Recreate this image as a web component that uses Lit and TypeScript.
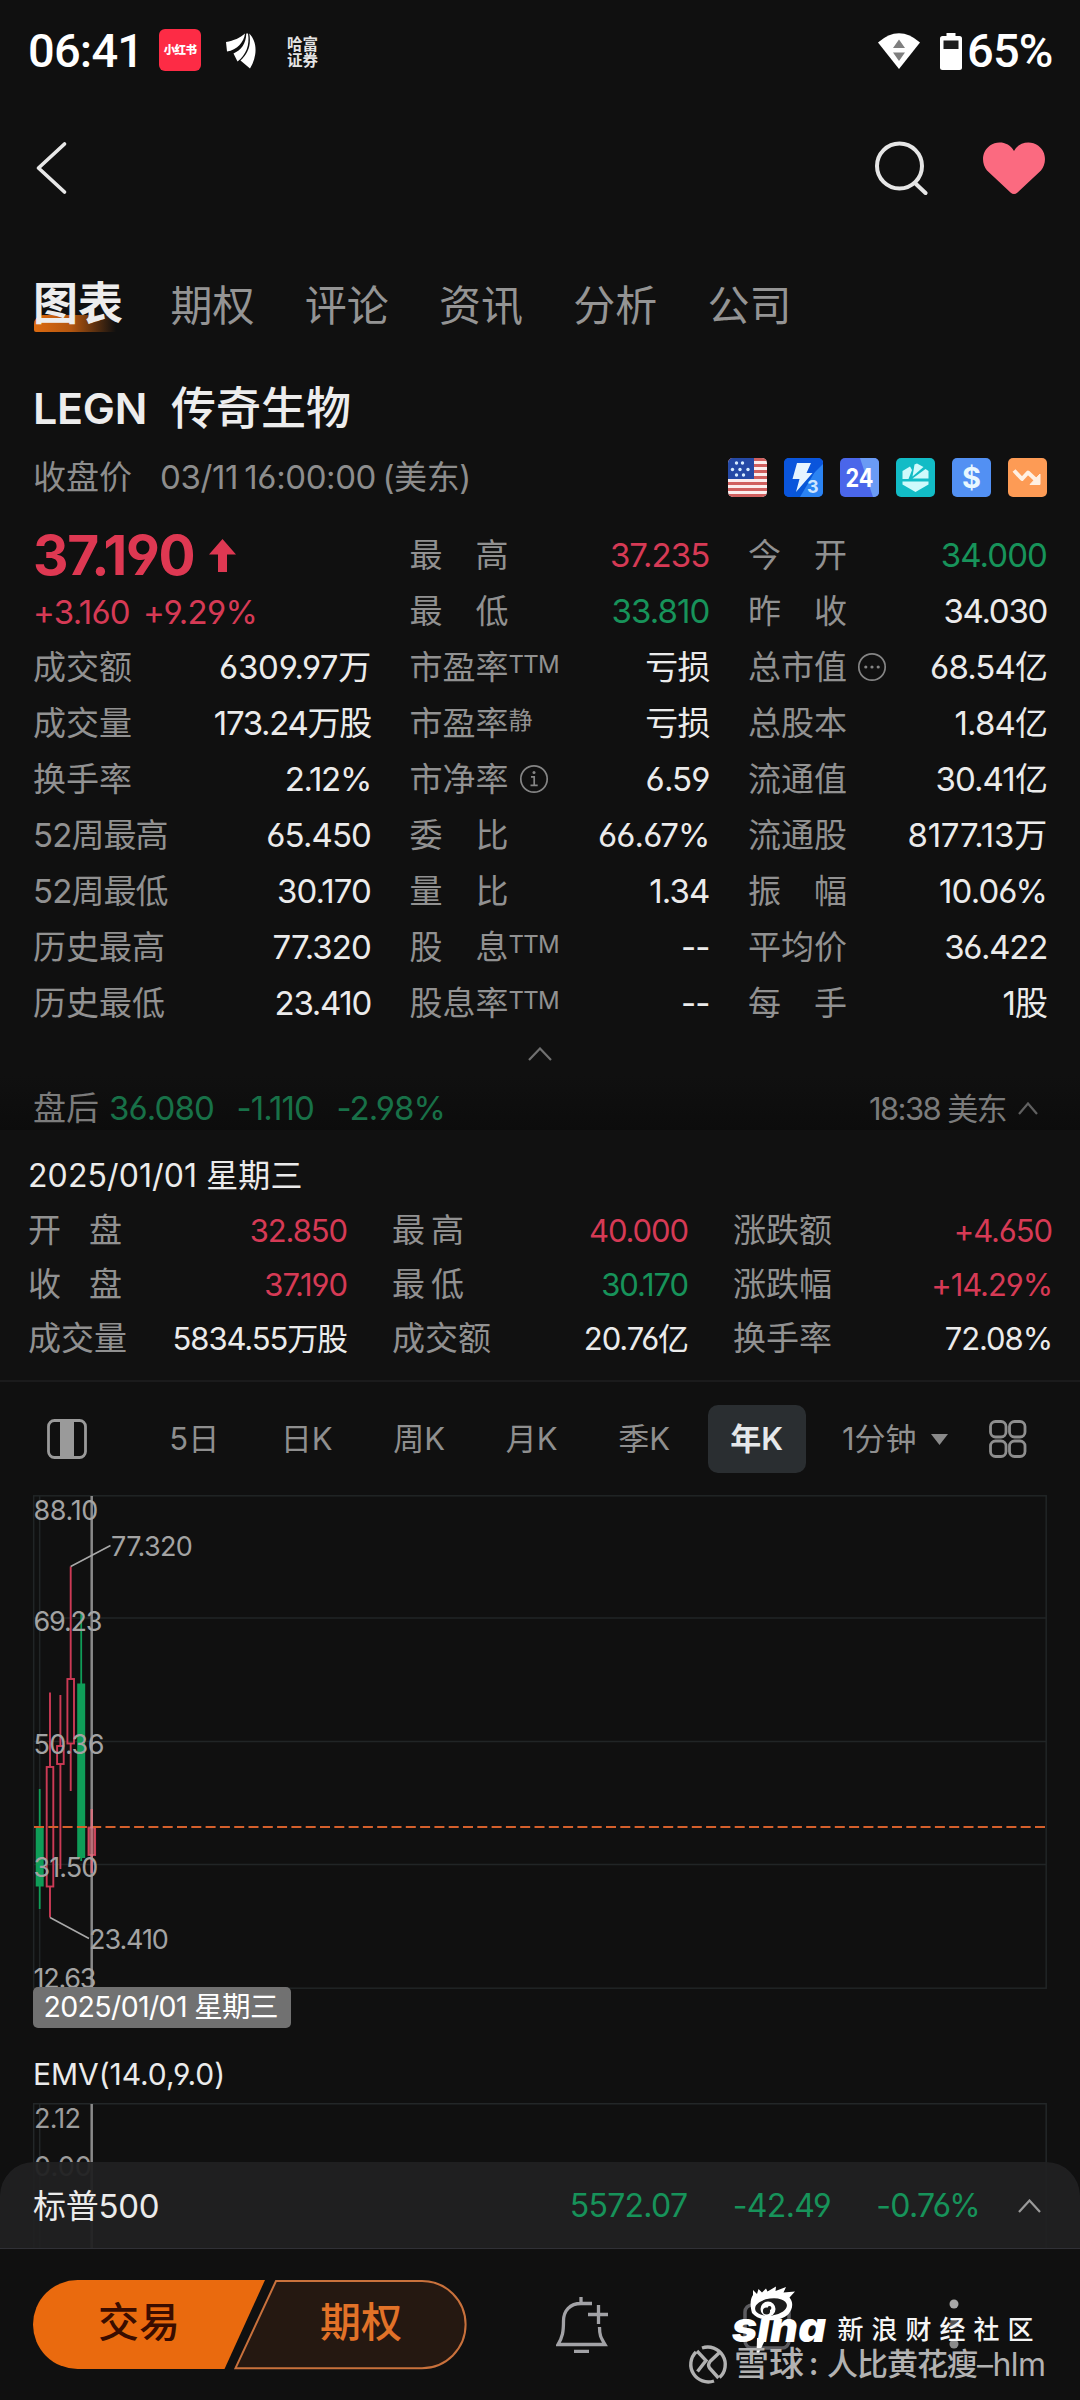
import { LitElement, html, svg, css, nothing } from "lit";
import { customElement, property } from "lit/decorators.js";
import { classMap } from "lit/directives/class-map.js";

type Tone = "up" | "down" | "flat";

interface Quote {
  label: string;
  value: string;
  tone?: Tone;
  sup?: string;
  icon?: "info" | "more";
  wide?: boolean;
  fit?: "loose" | "tight";
}

const COL_A: Quote[] = [
  { label: "成交额", value: "6309.97万", fit: "loose" },
  { label: "成交量", value: "173.24万股", fit: "tight" },
  { label: "换手率", value: "2.12%", fit: "tight" },
  { label: "52周最高", value: "65.450", wide: true },
  { label: "52周最低", value: "30.170", wide: true },
  { label: "历史最高", value: "77.320" },
  { label: "历史最低", value: "23.410", fit: "tight" },
];

const COL_B: Quote[] = [
  { label: "最\u3000高", value: "37.235", tone: "up" },
  { label: "最\u3000低", value: "33.810", tone: "down" },
  { label: "市盈率", value: "亏损", sup: "TTM" },
  { label: "市盈率", value: "亏损", sup: "静" },
  { label: "市净率", value: "6.59", icon: "info" },
  { label: "委\u3000比", value: "66.67%" },
  { label: "量\u3000比", value: "1.34" },
  { label: "股\u3000息", value: "--", sup: "TTM" },
  { label: "股息率", value: "--", sup: "TTM" },
];

const COL_C: Quote[] = [
  { label: "今\u3000开", value: "34.000", tone: "down" },
  { label: "昨\u3000收", value: "34.030", fit: "tight" },
  { label: "总市值", value: "68.54亿", icon: "more" },
  { label: "总股本", value: "1.84亿" },
  { label: "流通值", value: "30.41亿" },
  { label: "流通股", value: "8177.13万", fit: "loose" },
  { label: "振\u3000幅", value: "10.06%" },
  { label: "平均价", value: "36.422", fit: "tight" },
  { label: "每\u3000手", value: "1股" },
];

const DAY: { label: string; value: string; tone?: Tone; fit?: string }[] = [
  { label: "开盘", value: "32.850", tone: "up", fit: "two-wide" },
  { label: "最高", value: "40.000", tone: "up", fit: "two-narrow" },
  { label: "涨跌额", value: "+4.650", tone: "up" },
  { label: "收盘", value: "37.190", tone: "up", fit: "two-wide" },
  { label: "最低", value: "30.170", tone: "down", fit: "two-narrow" },
  { label: "涨跌幅", value: "+14.29%", tone: "up" },
  { label: "成交量", value: "5834.55万股" },
  { label: "成交额", value: "20.76亿" },
  { label: "换手率", value: "72.08%" },
];

@customElement("quote-row")
export class QuoteRow extends LitElement {
  @property({ attribute: false }) quote!: Quote;

  static styles = css`
    :host { display: flex; align-items: center; justify-content: space-between; height: 56px; }
    .label { display: flex; align-items: center; color: #919191; white-space: nowrap; }
    .wide { letter-spacing: -0.9px; }
    .sup { font-size: 24px; letter-spacing: -0.8px; margin: -4px 0 0 0; }
    .value { color: #ebebeb; white-space: nowrap; letter-spacing: -0.9px; }
    .loose { letter-spacing: -0.2px; }
    .tight { letter-spacing: -1.3px; }
    .up { color: #d63a55; }
    .down { color: #17935a; }
    .icon { width: 30px; height: 30px; margin-left: 10px; display: block; }
  `;

  render() {
    const q = this.quote;
    const tone = q.tone ?? "flat";
    const fit = q.fit ?? "normal";
    return html`
      <span class=${classMap({ label: true, wide: !!q.wide })}>
        <span>${q.label}</span>
        ${q.sup ? html`<span class="sup">${q.sup}</span>` : nothing}
        ${q.icon
          ? html`<svg class="icon" viewBox="0 0 30 30" fill="none" stroke="#858585" stroke-width="1.7">
              <circle cx="15" cy="15" r="13.2" />
              ${q.icon === "info"
                ? svg`<path d="M12 12.8h3.2v8.4M11.5 21.4h7.2" /><circle cx="15" cy="8.6" r="1.5" fill="#858585" stroke="none" />`
                : svg`<g fill="#858585" stroke="none"><circle cx="8.8" cy="15" r="1.6" /><circle cx="15" cy="15" r="1.6" /><circle cx="21.2" cy="15" r="1.6" /></g>`}
            </svg>`
          : nothing}
      </span>
      <span class=${classMap({ value: true, [tone]: true, [fit]: true })}>${q.value}</span>
    `;
  }
}

@customElement("badge-strip")
export class BadgeStrip extends LitElement {
  static styles = css`
    :host { display: flex; gap: 17px; }
    .badge { width: 39px; height: 39px; border-radius: 5px; overflow: hidden; display: block; }
    .num { font: 700 25px Inter, "Liberation Sans", sans-serif; }
    .small { font: 700 18px Inter, "Liberation Sans", sans-serif; }
    .dollar { font: 700 29px Inter, "Liberation Sans", sans-serif; }
  `;

  render() {
    const stars = [[14.5, 5], [8.5, 5], [4.5, 11.5], [12, 11.5], [20, 11.5], [8.5, 17], [15.5, 17]];
    return html`
      <svg class="badge" viewBox="0 0 39 39">
        <rect width="39" height="39" fill="#fbeeee" />
        ${[0, 1, 2, 3, 4, 5, 6].map((i) => svg`<rect y=${i * 6} width="39" height="3" fill="#d0605f" />`)}
        <rect width="26" height="21" fill="#2549a6" />
        ${stars.map(([x, y]) => svg`<circle cx=${x} cy=${y} r="1.7" fill="#d8ecff" />`)}
      </svg>
      <svg class="badge" viewBox="0 0 39 39">
        <rect width="39" height="39" fill="#0757d8" />
        <path d="M39 0V39H16Z" fill="#2b83f2" />
        <path d="M0 0H39V6L6 39H0Z" fill="#0a55dc" />
        <path d="M13 5h14l-4.500 10h6L12 34l3.500-13H8.500Z" fill="#e6f4ff" />
        <text class="small" x="23" y="34.500" fill="#cfe6ff">3</text>
      </svg>
      <svg class="badge" viewBox="0 0 39 39">
        <rect width="39" height="39" fill="#4a66ea" />
        <path d="M20 0H39V39H33Z" fill="#6a9bf5" />
        <text class="num" x="19.500" y="28.500" fill="#fff" text-anchor="middle" textLength="28" lengthAdjust="spacingAndGlyphs">24</text>
      </svg>
      <svg class="badge" viewBox="0 0 39 39">
        <rect width="39" height="39" fill="#12bcc6" />
        <g fill="#cffafc">
          <path d="M6.500 21V13L14 8.500 16 12 12.500 21Z" />
          <path d="M18.500 6.500 21 5.500 27.500 9 16.500 18.500Z" />
          <path d="M29.500 11 32.500 13V20.500H16.500Z" />
          <path d="M6.500 23.500H32.500V26.500L19.500 34 6.500 26.500Z" />
        </g>
      </svg>
      <svg class="badge" viewBox="0 0 39 39">
        <rect width="39" height="39" fill="#5290f3" />
        <text class="dollar" x="19.500" y="30" fill="#e8f7ff" text-anchor="middle">$</text>
      </svg>
      <svg class="badge" viewBox="0 0 39 39">
        <rect width="39" height="39" fill="#fd9b55" />
        <path d="M6 12.500 14 21 20 14.500 28.500 22.500" fill="none" stroke="#fff0e2" stroke-width="4" stroke-linejoin="round" />
        <path d="M32 16V26.500H22Z" fill="#fff0e2" stroke="#fff0e2" stroke-width="1" />
      </svg>
    `;
  }
}

interface Candle { x: number; high: number; low: number; top: number; bottom: number; up: boolean }

const CANDLES: Candle[] = [
  { x: 39.7, high: 1789, low: 1909, top: 1827, bottom: 1886.5, up: false },
  { x: 50, high: 1692.5, low: 1917.5, top: 1767, bottom: 1886.5, up: true },
  { x: 60.4, high: 1695, low: 1869, top: 1746, bottom: 1764, up: true },
  { x: 70.7, high: 1566.5, low: 1791, top: 1679, bottom: 1743.5, up: true },
  { x: 81.2, high: 1613, low: 1861, top: 1683.5, bottom: 1858, up: false },
  { x: 91.8, high: 1809, low: 1873, top: 1827.5, bottom: 1855, up: true },
];

@customElement("price-chart")
export class PriceChart extends LitElement {
  static styles = css`
    :host { display: block; height: 545px; }
    .plot { display: block; width: 1080px; height: 545px; }
    .axis { font: 400 27px Inter, "Noto Sans CJK SC", sans-serif; letter-spacing: -0.9px; fill: #a3a3a3; }
    .tip { font: 400 28.5px Inter, "Noto Sans CJK SC", sans-serif; fill: #fff; }
  `;

  render() {
    const labels: [string, number, number][] = [
      ["88.10", 1520, 64], ["69.23", 1631, 68], ["50.36", 1754, 70], ["31.50", 1877, 64], ["12.63", 1988, 62],
    ];
    return html`
      <svg class="plot" viewBox="0 1495 1080 545">
        <g stroke="#212526" stroke-width="1.5" fill="none">
          <rect x="33.7" y="1495.8" width="1012.5" height="492.4" />
          <path d="M39.7 1496V1988M34 1618H1046M34 1741.5H1046M34 1864.5H1046" />
        </g>
        ${CANDLES.map((c) =>
          c.up
            ? svg`<g stroke="#cc3a55" stroke-width="1.9" fill="none">
                <path d="M${c.x} ${c.high}V${c.top}M${c.x} ${c.bottom}V${c.low}" />
                <rect x=${c.x - 3.3} y=${c.top} width="6.6" height=${c.bottom - c.top} />
              </g>`
            : svg`<g fill="#0f9d58">
                <rect x=${c.x - 0.9} y=${c.high} width="1.8" height=${c.low - c.high} />
                <rect x=${c.x - 4} y=${c.top} width="8" height=${c.bottom - c.top} />
              </g>`
        )}
        <path d="M34 1827H1046" stroke="#d5602c" stroke-width="2.2" stroke-dasharray="10 4.3" />
        <path d="M91.7 1496V1988" stroke="#b9b9b9" stroke-opacity="0.72" stroke-width="2.5" />
        <rect x="88.5" y="1828" width="6.6" height="27" fill="#d8606f" fill-opacity="0.6" />
        <path d="M91.7 1809V1828M91.7 1855V1873" stroke="#d8707d" stroke-width="2" />
        <g stroke="#a9a9a9" stroke-width="1.5" fill="none">
          <path d="M70.7 1566.5 110.5 1545.5M50 1917.5 89 1938.5" />
        </g>
        ${labels.map(([t, y, w]) => svg`<text class="axis" x="33.5" y=${y} textLength=${w}>${t}</text>`)}
        <text class="axis" x="111" y="1555.5" textLength="81">77.320</text>
        <text class="axis" x="89" y="1948.5" textLength="79">23.410</text>
        <rect x="33" y="1987" width="258" height="41" rx="5" fill="#717171" />
        <text class="tip" x="43.5" y="2016.5" textLength="235">2025/01/01 星期三</text>
      </svg>
    `;
  }
}

@customElement("app-root")
export class AppRoot extends LitElement {
  static styles = css`
    :host {
      display: flex; flex-direction: column; position: relative; width: 1080px; height: 2400px;
      overflow: hidden; background: #101010; color: #ebebeb;
      font: 400 33px/1 Inter, "Noto Sans CJK SC", sans-serif;
      font-feature-settings: "cv03", "cv04";
    }
    svg { display: block; flex: none; }
    .up { color: #d63a55; }
    .down { color: #17935a; }

    .status { height: 102px; display: flex; align-items: center; padding: 0 29px 0 28px; box-sizing: border-box;
      font: 500 47px/56px Roboto, sans-serif; color: #fff; }
    .clock { width: 131px; letter-spacing: -0.8px; }
    .xhs { width: 42px; height: 42px; border-radius: 6px; background: #fd2b45; color: #fff; display: flex;
      align-items: center; justify-content: center; font: 900 11.5px/1 "Noto Sans CJK SC", sans-serif; letter-spacing: -0.7px; margin-top: -2px; }
    .leaf { margin-left: 25px; }
    .broker { margin-left: 30px; width: 32px; font: 700 15.5px/16.5px "Noto Sans CJK SC", sans-serif; color: #e4e4e4; }
    .grow { flex: 1; }
    .battery { margin: 0 5px 0 20px; }
    .percent { width: 84px; letter-spacing: -0.8px; white-space: nowrap; }

    .nav { height: 131px; display: flex; align-items: center; padding: 0 34px 0 35px; }
    .heart { margin-left: 53px; }

    .tabs { height: 144px; box-sizing: border-box; padding-top: 2px; display: flex; align-items: center; padding-left: 33px; font-size: 42px; color: #949494; gap: 50.2px; }
    .tab { white-space: nowrap; }
    .tab-on { font-size: 45px; font-weight: 700; color: #ededed; margin: -5px -2.6px 0 0; position: relative; z-index: 0; }
    .tab-on::after { content: ""; position: absolute; left: 1px; bottom: -6px; width: 82px; height: 17px; z-index: -1;
      background: linear-gradient(90deg, #dc6a10, #b4560f 45%, transparent); border-radius: 9px 0 0 2px; }

    .title { height: 59px; box-sizing: border-box; padding: 3px 0 0 33px; display: flex; align-items: center; font-size: 45px; font-weight: 500; gap: 24px; color: #ededed; }
    .ticker { font-size: 43px; font-weight: 600; letter-spacing: -0.3px; }
    .sub { height: 83px; display: flex; align-items: center; padding: 0 33px; color: #8d8d8d; margin-bottom: 8px; }
    .when { margin-left: 28px; letter-spacing: -0.4px; word-spacing: -2.5px; }

    .quotes { display: grid; grid-template-columns: 338px 300px 299px; column-gap: 38.5px; padding-left: 33px; height: 504px; }
    .headline { height: 112px; display: flex; flex-direction: column; }
    .price { height: 56px; display: flex; align-items: center; gap: 15px; font-size: 55px; font-weight: 700; color: #de3852; letter-spacing: -1.2px; }
    .change { height: 56px; box-sizing: border-box; padding-top: 3px; display: flex; align-items: center; gap: 13px; letter-spacing: -0.7px; }
    .fold { height: 45px; display: flex; align-items: center; justify-content: center; }

    .after { height: 54px; box-sizing: border-box; padding: 10px 42px 0 33px; display: flex; align-items: center; color: #7b7b7b;
      background: linear-gradient(#101010, #0c0c0c); letter-spacing: -0.9px; }
    .after-zh { letter-spacing: 0; margin-right: 10px; }
    .after-num { color: #187148; margin-right: 22.5px; }
    .after-time { font-size: 31px; margin-right: 12px; letter-spacing: -1.6px; }

    .day { height: 252px; box-sizing: border-box; padding: 19px 28px 0 28px; background: #111111; border-bottom: 2px solid #1b1b1c; font-size: 32px; }
    .date { height: 54px; line-height: 54px; letter-spacing: 0.1px; }
    .day-grid { display: grid; grid-template-columns: 319px 296px 319px; column-gap: 45px; grid-auto-rows: 54px; }
    .cell { display: flex; align-items: center; justify-content: space-between; white-space: nowrap; font-size: 31px; letter-spacing: -1.1px; }
    .cell-label { color: #919191; letter-spacing: 0; font-size: 33px; }
    .two-wide { letter-spacing: 28px; }
    .two-narrow { letter-spacing: 6px; }

    .periods { height: 113px; display: flex; align-items: center; color: #8f8f8f; font-size: 31px; padding-left: 47px; }
    .period-list { display: flex; margin-left: 51px; }
    .period { width: 112.5px; height: 68px; display: flex; align-items: center; justify-content: center; }
    .pill { width: 98px; height: 68px; border-radius: 10px; background: #2a2e31; color: #e6e8ea; font-weight: 600;
      display: flex; align-items: center; justify-content: center; }
    .minute { margin-left: 29px; width: 76px; white-space: nowrap; }
    .caret { margin: 2px 0 0 13px; }
    .apps { margin-left: 41px; }

    .indicator { height: 63px; box-sizing: border-box; padding: 5px 0 0 33px; line-height: 59px; font-size: 30px; letter-spacing: -0.05px; }
    .ind-axis { font: 400 27px Inter, sans-serif; fill: #9c9c9c; letter-spacing: -0.9px; }
    .index { height: 87px; margin-top: -87px; box-sizing: border-box; position: relative; display: flex; align-items: center;
      padding: 2px 39px 0 33px; border-radius: 34px 34px 0 0; background: rgba(33, 33, 34, 0.95); border-bottom: 1.5px solid #303036; font-size: 32px; letter-spacing: -0.7px; }
    .index-name { font-size: 33px; letter-spacing: -0.3px; }
    .index-gap { margin-left: 45.5px; }
    .index-arrow { margin-left: 38px; }

    .actions { height: 151px; display: flex; align-items: flex-start; padding: 31px 0 0 33px; box-sizing: border-box; }
    .btn { font: 500 41px "Noto Sans CJK SC", sans-serif; }
    .bell { margin: 17px 0 0 88px; }
    .chart-icon { margin: 23px 0 0 135px; }
    .dots { margin: 18px 0 0 158px; }

    .mark { position: absolute; left: 685px; top: 2280px; }
    .sina { font: italic 900 42px Inter, "Liberation Sans", sans-serif; }
    .sina-zh { font: 500 26px "Noto Sans CJK SC", sans-serif; }
    .brand { font: 500 34px "Noto Sans CJK SC", sans-serif; }
    .xueqiu { font: 500 31px "Noto Sans CJK SC", sans-serif; }
    .xueqiu-lat { font: 400 32px Inter, sans-serif; }
  `;

  private chevron(w: number, h: number, color: string, cls = "") {
    return html`<svg class=${cls} width=${w} height=${h} viewBox="0 0 ${w} ${h}" fill="none" stroke=${color} stroke-width="2.2">
      <path d="M1 ${h - 1}L${w / 2} 1.5L${w - 1} ${h - 1}" />
    </svg>`;
  }

  private header() {
    return html`
      <div class="status">
        <span class="clock">06:41</span>
        <span class="xhs">小红书</span>
        <svg class="leaf" width="31" height="36" viewBox="0 0 31 36" fill="#fff">
          <path d="M0 9C8 7.500 14 5 19 .5C18 9 11 17 1 18.500Z" />
          <path d="M20.300 .5C20 11 15 17 7.500 20.500L11.500 28.500C20 22 24 12 22 .5Z" />
          <path d="M23.300 .5C25.500 13 21.500 21 14.500 27.500L24 35.500C31.500 23 31.500 9 23.300 .5Z" />
        </svg>
        <span class="broker">哈富证券</span>
        <span class="grow"></span>
        <svg width="42" height="36" viewBox="0 0 42 36">
          <path d="M0 9.500Q21-9 42 9.500L21 36Z" fill="#fff" />
          <path d="M15 15L21 6.500 27 15ZM15 19.500H27L21 28Z" fill="#7f7f7f" />
        </svg>
        <svg class="battery" width="22" height="37" viewBox="0 0 22 37">
          <path d="M6.500 0h9v4h-9z" fill="#fff" />
          <rect y="3" width="22" height="34" rx="2.500" fill="#fff" />
          <rect x="3.500" y="7.500" width="15" height="8.500" fill="#1d1d1d" />
        </svg>
        <span class="percent">65%</span>
      </div>
      <div class="nav">
        <svg width="33" height="54" viewBox="0 0 33 54" fill="none" stroke="#e8e8e8" stroke-width="3.700" stroke-linecap="round" stroke-linejoin="round">
          <path d="M29.500 3L3.500 27L29.500 51" />
        </svg>
        <span class="grow"></span>
        <svg width="54" height="54" viewBox="0 0 54 54" fill="none" stroke="#e6e6e6" stroke-width="4" stroke-linecap="round">
          <circle cx="24.500" cy="25" r="22.500" /><path d="M41 43L50.500 52" />
        </svg>
        <svg class="heart" width="64" height="54" viewBox="0 0 64 54">
          <path d="M32 10C27 .5 15-.5 8 4.500C-1 11-.5 23 5 29.500L28.500 51.500Q32 54.500 35.500 51.500L59 29.500C64.500 23 65 11 56 4.500C49-.5 37 .5 32 10Z" fill="#fb6a80" />
        </svg>
      </div>
      <div class="tabs">
        <span class="tab tab-on">图表</span>
        ${["期权", "评论", "资讯", "分析", "公司"].map((t) => html`<span class="tab">${t}</span>`)}
      </div>
      <div class="title"><span class="ticker">LEGN</span><span>传奇生物</span></div>
      <div class="sub">
        <span>收盘价</span><span class="when">03/11 16:00:00 (美东)</span>
        <span class="grow"></span>
        <badge-strip></badge-strip>
      </div>
    `;
  }

  private quotes() {
    const rows = (list: Quote[]) => list.map((q) => html`<quote-row .quote=${q}></quote-row>`);
    return html`
      <div class="quotes">
        <div>
          <div class="headline">
            <div class="price">
              <span>37.190</span>
              <svg width="27" height="33" viewBox="0 0 27 33"><path d="M13.500 0L27 15.500H18V33H9V15.500H0Z" fill="#de3852" /></svg>
            </div>
            <div class="change up"><span>+3.160</span><span>+9.29%</span></div>
          </div>
          ${rows(COL_A)}
        </div>
        <div>${rows(COL_B)}</div>
        <div>${rows(COL_C)}</div>
      </div>
      <div class="fold">${this.chevron(24, 14, "#707070")}</div>
      <div class="after">
        <span class="after-zh">盘后</span>
        <span class="after-num">36.080</span><span class="after-num">-1.110</span><span class="after-num">-2.98%</span>
        <span class="grow"></span>
        <span class="after-time">18:38 美东</span>${this.chevron(20, 13, "#606060")}
      </div>
    `;
  }

  private day() {
    return html`
      <div class="day">
        <div class="date">2025/01/01 星期三</div>
        <div class="day-grid">
          ${DAY.map((d) => html`<div class="cell">
            <span class="cell-label ${d.fit ?? ""}">${d.label}</span>
            <span class=${d.tone ?? "flat"}>${d.value}</span>
          </div>`)}
        </div>
      </div>
      <div class="periods">
        <svg width="40" height="40" viewBox="0 0 40 40">
          <rect x="1.500" y="1.500" width="37" height="37" rx="6" fill="none" stroke="#9a9a9a" stroke-width="2.800" />
          <rect x="13" y="1" width="14" height="38" fill="#9a9a9a" />
        </svg>
        <div class="period-list">
          ${["5日", "日K", "周K", "月K", "季K"].map((p) => html`<span class="period">${p}</span>`)}
          <span class="period"><span class="pill">年K</span></span>
        </div>
        <span class="minute">1分钟</span>
        <svg class="caret" width="17" height="11" viewBox="0 0 17 11"><path d="M0 0H17L8.500 11Z" fill="#8a8a8a" /></svg>
        <svg class="apps" width="38" height="38" viewBox="0 0 38 38" fill="none" stroke="#8e8e8e" stroke-width="2.800">
          ${[[1.5, 1.5], [20.5, 1.5], [1.5, 21], [20.5, 21]].map(([x, y]) => svg`<rect x=${x} y=${y} width="15.500" height="15.500" rx="5" />`)}
        </svg>
      </div>
    `;
  }

  private footer() {
    return html`
      <div class="indicator">EMV(14.0,9.0)</div>
      <svg width="1080" height="146" viewBox="0 2103 1080 146">
        <path d="M33.700 2249V2103.800H1046.200V2249M39.700 2104V2249" fill="none" stroke="#232728" stroke-width="1.500" />
        <path d="M91.700 2104V2249" stroke="#8a8a8a" stroke-width="2.500" />
        <text class="ind-axis" x="34" y="2128" textLength="46">2.12</text>
        <text class="ind-axis" x="34" y="2176" textLength="57">0.00</text>
      </svg>
      <div class="index">
        <span class="index-name">标普500</span><span class="grow"></span>
        <span class="down">5572.07</span><span class="down index-gap">-42.49</span><span class="down index-gap">-0.76%</span>
        ${this.chevron(23, 14, "#9a9a9a", "index-arrow")}
      </div>
      <div class="actions">
        <svg width="435" height="90" viewBox="33 2280 435 90">
          <path d="M265 2280H77.500A44.500 44.500 0 0 0 77.500 2369H224.500Z" fill="#ea6a0e" />
          <path d="M276 2281H422A43.500 43.500 0 0 1 422 2368.200H235.500Z" fill="#251811" stroke="#c9713c" stroke-width="2" />
          <text class="btn" x="98" y="2337" fill="#3a0d00">交易</text>
          <text class="btn" x="320" y="2337" fill="#e27228">期权</text>
        </svg>
        <svg class="bell" width="52" height="56" viewBox="0 0 52 56" fill="none" stroke="#a2a2a6" stroke-width="3.300">
          <path d="M25 0V6M36 6.500H25C14 6.500 7.500 13.500 7.500 24C7.500 35 6.500 40 2 47.500H49C44.500 40 43.500 38 43.500 30M42.500 8V27M32 17.500H52M18 54.500H33" />
        </svg>
        <svg class="chart-icon" width="48" height="47" viewBox="0 0 48 47" fill="none" stroke="#5c5c60" stroke-width="3.500">
          <rect x="2" y="2" width="44" height="43" rx="7" />
        </svg>
        <svg class="dots" width="10" height="52" viewBox="0 0 10 52">
          <circle cx="5" cy="6" r="4.500" fill="#a8a8a8" /><circle cx="5" cy="26" r="4.500" fill="#555" /><circle cx="5" cy="46" r="4.500" fill="#8a8a8a" />
        </svg>
      </div>
    `;
  }

  private watermark() {
    return html`
      <svg class="mark" width="395" height="120" viewBox="685 2280 395 120">
        <path d="M752 2313C750 2306 750 2299 753 2295L753 2290 757 2294 758.500 2289 762 2292.500 766 2288.500 767.500 2291.500 776 2286.500 775.500 2291 786 2287 783.500 2292.500 795 2291.500 789.500 2297.500C793.500 2302 793 2309 788.500 2314C780 2322.500 760 2322.500 752 2313Z" fill="#fff" />
        <ellipse cx="771" cy="2307" rx="16" ry="8.500" fill="#1c1c1c" transform="rotate(-8 771 2307)" />
        <circle cx="768" cy="2309" r="7.500" fill="#fff" />
        <circle cx="766.500" cy="2311" r="3.600" fill="#1a1a1a" /><circle cx="769.500" cy="2308" r="1.900" fill="#1a1a1a" />
        <text class="sina" x="732" y="2342" fill="#fff" textLength="94" lengthAdjust="spacingAndGlyphs">s\u0131na</text>
        <path d="M757 2338H766L758.500 2354H756.500Z" fill="#fff" />
        <g fill="#f5f5f5">
          ${["新", "浪", "财", "经", "社", "区"].map((c, i) => svg`<text class="sina-zh" x=${837.5 + i * 34} y="2339">${c}</text>`)}
        </g>
        <g fill="none" stroke="#b2b2b2" stroke-width="3.400">
          <path d="M696 2352A17.500 17.500 0 0 0 714 2381" />
          <path d="M702 2348A17.500 17.500 0 0 1 719.500 2377.500" />
          <path d="M697 2351L706 2360.500L697.500 2371.500M720 2352L710 2361.500Q707.500 2364.500 709.500 2368L718.500 2378" />
        </g>
        <g fill="#b2b2b2">
          <text class="brand" x="734" y="2376" textLength="70" lengthAdjust="spacingAndGlyphs">雪球</text>
          <text class="xueqiu" x="809" y="2375">:</text>
          <text class="xueqiu" x="827" y="2375" textLength="151">人比黄花瘦</text>
          <text class="xueqiu-lat" x="977" y="2375.500" textLength="69">–hlm</text>
        </g>
      </svg>
    `;
  }

  render() {
    return html`
      ${this.header()} ${this.quotes()} ${this.day()}
      <price-chart></price-chart>
      ${this.footer()} ${this.watermark()}
    `;
  }
}
